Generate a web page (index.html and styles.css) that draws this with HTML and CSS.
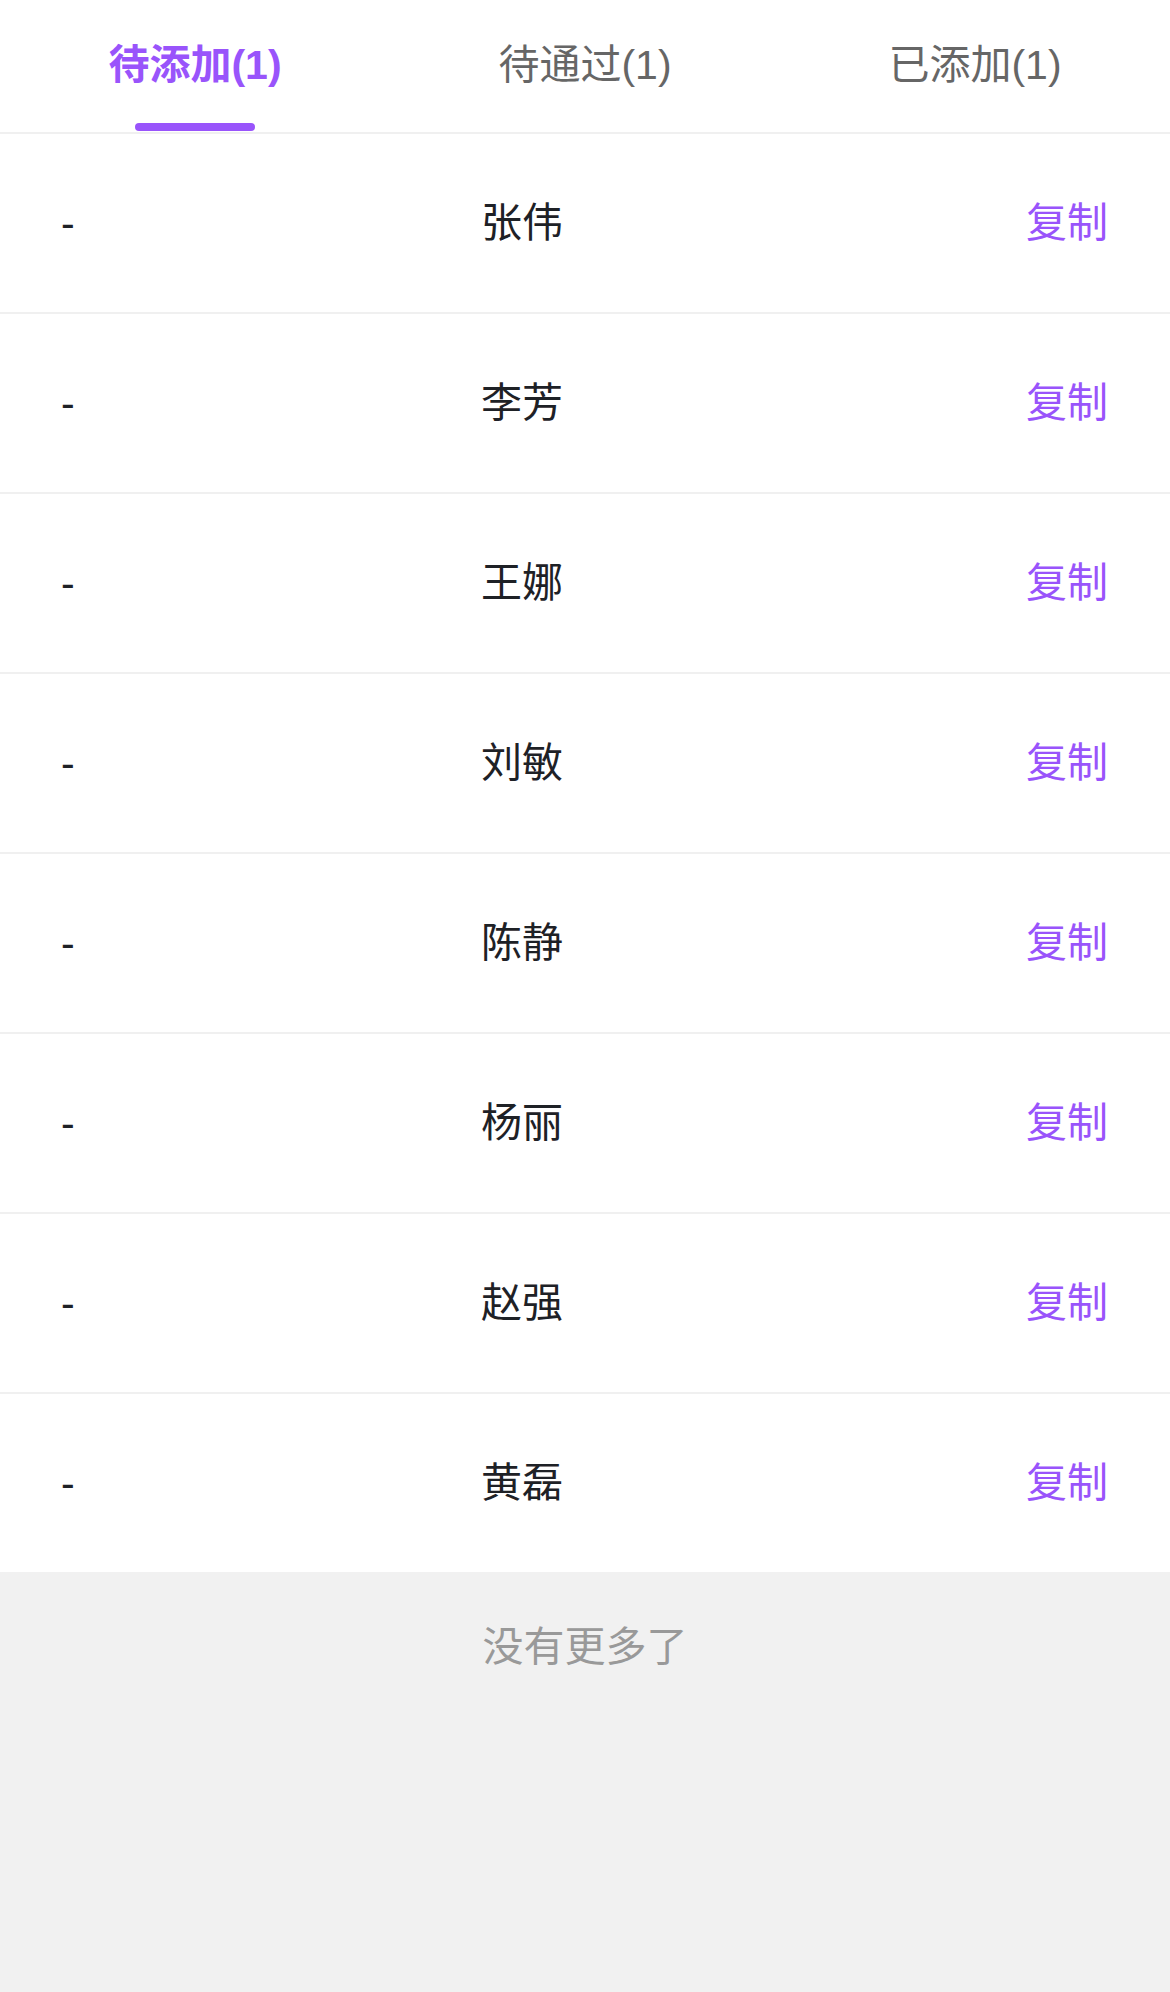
FILE: index.html
```html
<!DOCTYPE html>
<html lang="zh-CN">
<head>
<meta charset="utf-8">
<title>待添加</title>
<link rel="stylesheet" href="styles.css">
</head>
<body>
<div class="page">
  <nav class="tabs">
    <div class="tab active"><span class="tab-label">待添加(1)</span><span class="tab-bar"></span></div>
    <div class="tab"><span class="tab-label">待通过(1)</span><span class="tab-bar"></span></div>
    <div class="tab"><span class="tab-label">已添加(1)</span><span class="tab-bar"></span></div>
  </nav>
  <ul class="list">
    <li class="row"><span class="dash">-</span><span class="name">张伟</span><span class="copy">复制</span></li>
    <li class="row"><span class="dash">-</span><span class="name">李芳</span><span class="copy">复制</span></li>
    <li class="row"><span class="dash">-</span><span class="name">王娜</span><span class="copy">复制</span></li>
    <li class="row"><span class="dash">-</span><span class="name">刘敏</span><span class="copy">复制</span></li>
    <li class="row"><span class="dash">-</span><span class="name">陈静</span><span class="copy">复制</span></li>
    <li class="row"><span class="dash">-</span><span class="name">杨丽</span><span class="copy">复制</span></li>
    <li class="row"><span class="dash">-</span><span class="name">赵强</span><span class="copy">复制</span></li>
    <li class="row"><span class="dash">-</span><span class="name">黄磊</span><span class="copy">复制</span></li>
  </ul>
  <div class="footer">没有更多了</div>
</div>
</body>
</html>
```

FILE: styles.css
```css
* { box-sizing: border-box; }
html, body {
  margin: 0;
  padding: 0;
  background: #f1f1f1;
}
body {
  font-family: "Liberation Sans", "Noto Sans CJK SC", sans-serif;
  font-size: 41px;
  color: #1e2126;
}
.page {
  min-height: 1992px;
  background: #f1f1f1;
}
.tabs {
  display: flex;
  height: 134px;
  background: #ffffff;
  border-bottom: 2px solid #f0f0f0;
}
.tab {
  flex: 1;
  display: flex;
  flex-direction: column;
  align-items: center;
  padding-top: 37px;
}
.tab-label {
  font-size: 41px;
  line-height: 56px;
  color: #666666;
}
.tab-bar {
  width: 120px;
  height: 8px;
  margin-top: 30px;
  border-radius: 4px;
  background: transparent;
}
.tab.active .tab-label {
  color: #9954fb;
  font-weight: 700;
}
.tab.active .tab-bar {
  background: #9954fb;
}
.list {
  list-style: none;
  margin: 0;
  padding: 0;
  background: #ffffff;
}
.row {
  display: grid;
  grid-template-columns: 421px 1fr auto;
  align-items: center;
  height: 180px;
  padding: 0 62px 0 60px;
  border-bottom: 2px solid #f0f0f0;
  line-height: 56px;
}
.row:last-child {
  height: 178px;
  border-bottom: none;
}
.dash {
  color: #1e2126;
  padding-left: 1px;
}
.name {
  color: #1e2126;
}
.copy {
  color: #9954fb;
}
.footer {
  padding-top: 47px;
  line-height: 56px;
  text-align: center;
  color: #999999;
  font-size: 41px;
}
```
